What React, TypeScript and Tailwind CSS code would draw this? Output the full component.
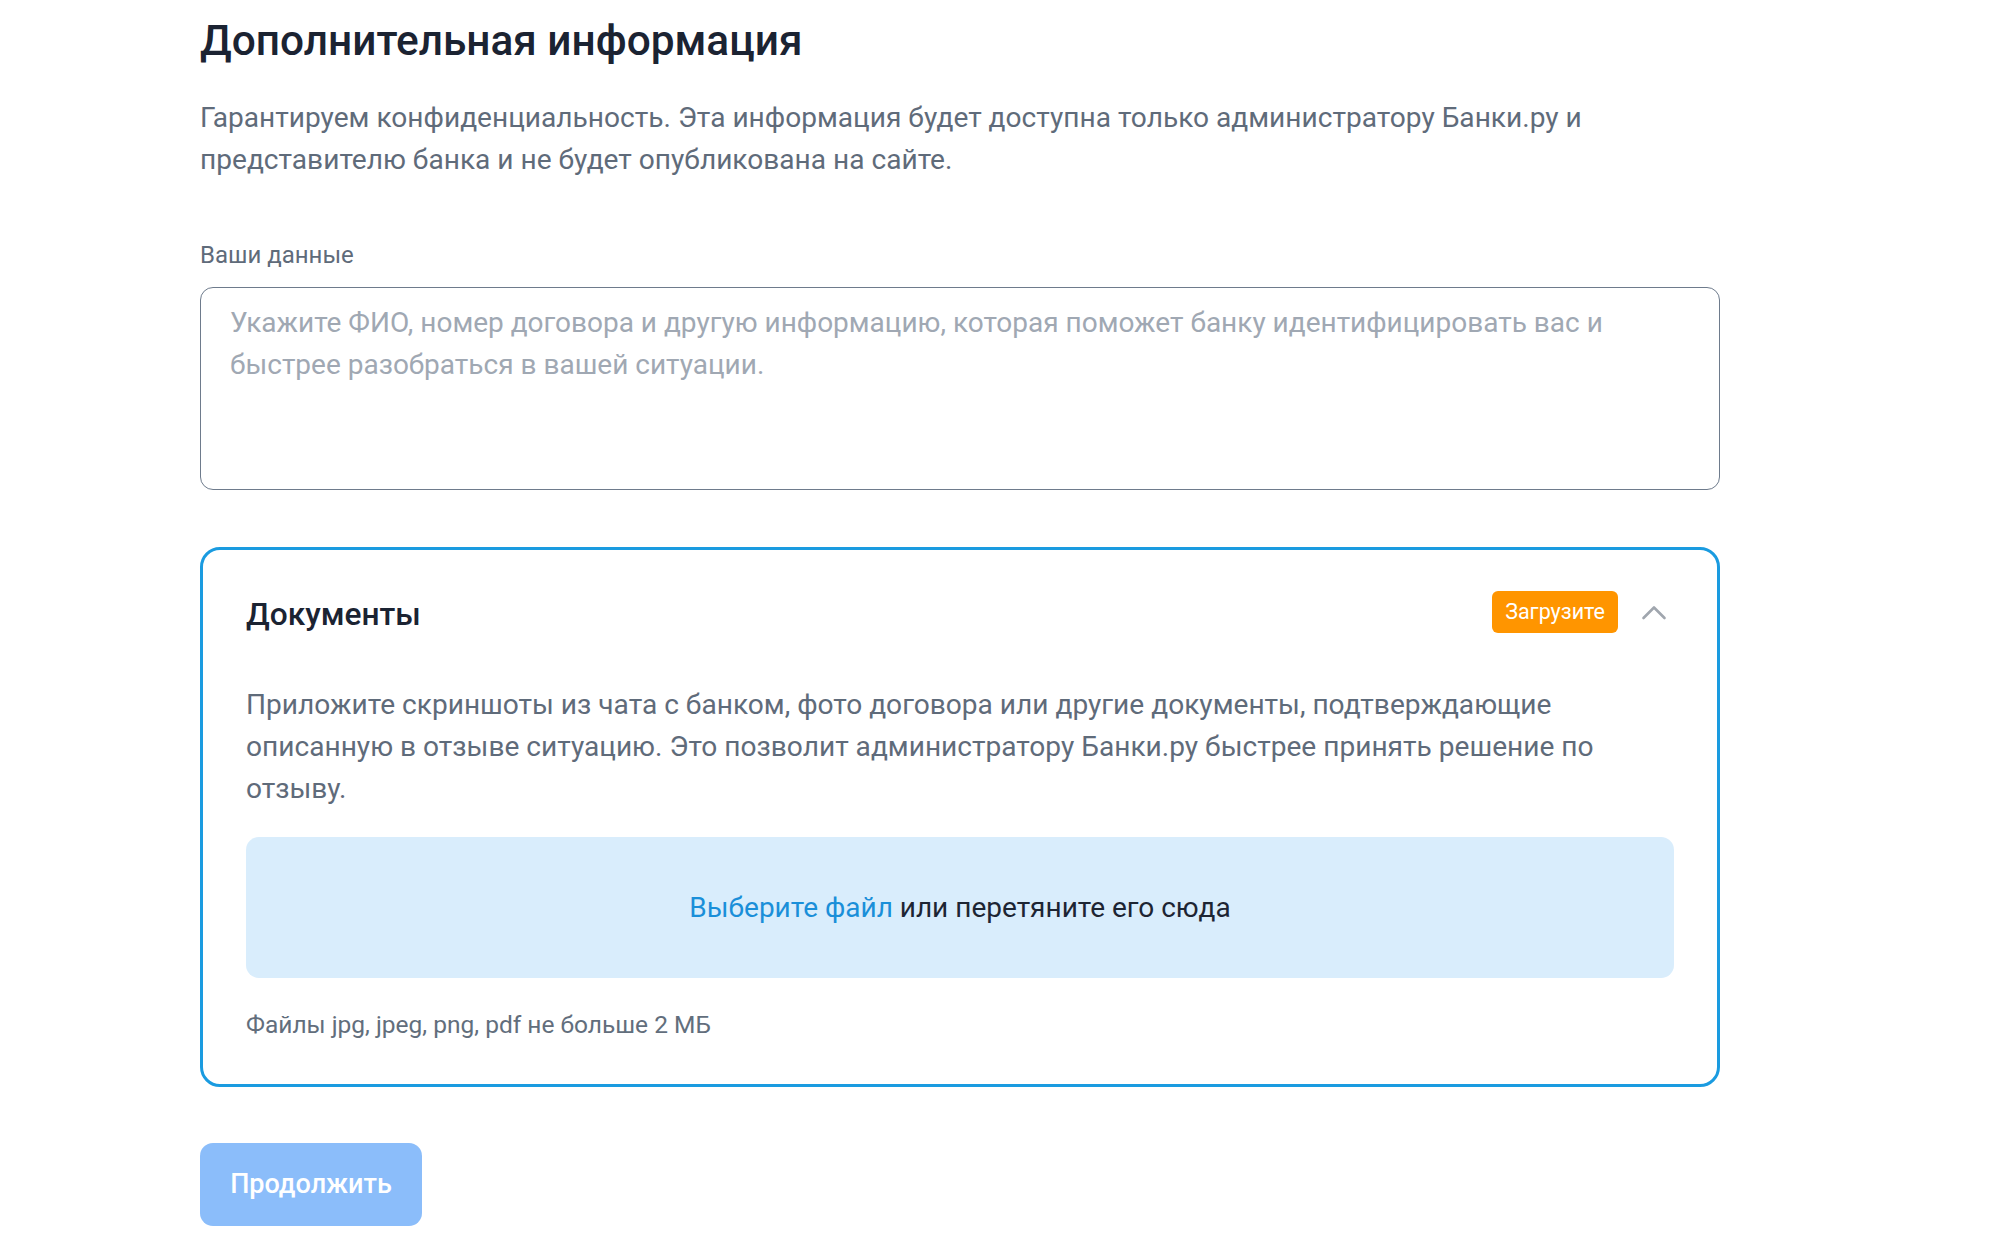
const font = { fontFamily: "Roboto, 'Noto Sans', sans-serif" };

const Chevron = () => (
  <svg width="26" height="15" viewBox="0 0 26 15" fill="none" className="mr-[7px]">
    <path d="M2.5 13L13 2.5L23.5 13" stroke="#a0a6ae" strokeWidth="2.6" strokeLinecap="round" strokeLinejoin="round" />
  </svg>
);

const App = () => {
  return (
    <div className="min-h-screen bg-white" style={font}>
      <div className="pl-[200px] pt-[13px] pb-[20px]">
        <div className="w-[1520px] flex flex-col">
          <h1 className="text-[42.4px] leading-[56px] font-medium text-[#1b2332]">
            Дополнительная информация
          </h1>
          <p className="mt-[28px] text-[28.1px] leading-[42px] text-[#5f6b7a]">
            Гарантируем конфиденциальность. Эта информация будет доступна только администратору Банки.ру и
            представителю банка и не будет опубликована на сайте.
          </p>

          {/* Your data */}
          <label className="mt-[58px] text-[24px] leading-[32px] text-[#5f6b7a]">Ваши данные</label>
          <textarea
            className="mt-[16px] h-[203px] w-full resize-none rounded-[13px] border-[1.5px] border-[#6e7b8c] px-[29px] pt-[14px] text-[28px] leading-[42px] text-[#1b2332] placeholder:text-[#a0a8b3] outline-none"
            placeholder="Укажите ФИО, номер договора и другую информацию, которая поможет банку идентифицировать вас и быстрее разобраться в вашей ситуации."
          />

          {/* Documents */}
          <div className="mt-[57px] rounded-[20px] border-[3px] border-[#1a9be0] px-[43px] pt-[45px] pb-[43px]">
            <div className="flex items-center justify-between h-[40px]">
              <h2 className="text-[31.7px] leading-[40px] font-medium text-[#1b2332]">Документы</h2>
              <div className="flex items-center gap-[23px] -mt-[6px]">
                <span className="rounded-[6px] bg-[#ff9500] px-[13px] h-[42px] flex items-center text-[21.5px] text-white">
                  Загрузите
                </span>
                <Chevron />
              </div>
            </div>
            <p className="mt-[49px] text-[28.1px] leading-[42px] text-[#5f6b7a]">
              Приложите скриншоты из чата с банком, фото договора или другие документы, подтверждающие
              описанную в отзыве ситуацию. Это позволит администратору Банки.ру быстрее принять решение по
              отзыву.
            </p>
            <div className="mt-[27px] h-[141px] rounded-[13px] bg-[#d9edfc] flex items-center justify-center text-[28px] leading-[42px]">
              <span className="text-[#1a8fd9] cursor-pointer">Выберите файл</span>
              <span className="text-[#1d2533]">&nbsp;или перетяните его сюда</span>
            </div>
            <p className="mt-[31px] text-[24.5px] leading-[32px] text-[#626e7c]">
              Файлы jpg, jpeg, png, pdf не больше 2 МБ
            </p>
          </div>

          <div className="mt-[56px]">
            <button
              disabled
              className="h-[83px] w-[222px] rounded-[13px] bg-[#8bbdfa] text-[27px] font-medium text-white"
            >
              Продолжить
            </button>
          </div>
        </div>
      </div>
    </div>
  );
};

export default App;
